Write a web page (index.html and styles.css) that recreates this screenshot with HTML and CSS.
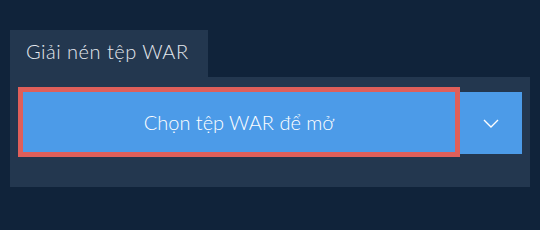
FILE: index.html
```html
<!DOCTYPE html>
<html lang="vi">
<head>
  <meta charset="UTF-8" />
  <title>Giải nén tệp WAR</title>
  <link rel="stylesheet" href="styles.css">
</head>
<body>
  <div class="tab">Giải nén tệp WAR</div>
  <div class="panel">
    <button class="open-btn">Chọn tệp WAR để mở</button>
    <button class="drop-btn" aria-label="Thêm">
      <svg width="16" height="9" viewBox="0 0 16 9">
        <path d="M1 1 L8 8 L15 1" fill="none" stroke="#fff" stroke-width="1.4"/>
      </svg>
    </button>
  </div>
</body>
</html>
```

FILE: styles.css
```css
body {
  margin: 0;
  background-color: #10233a;
  font-family: Lato, 'Noto Sans', sans-serif;
  width: 540px;
  height: 230px;
  overflow: hidden;
}

.tab {
  margin: 30px 0 0 10px;
  width: 198px;
  height: 47px;
  box-sizing: border-box;
  padding: 4px 0 0 16px;
  background-color: #23374f;
  color: #e4e8ee;
  font-size: 20px;
  font-weight: 300;
  letter-spacing: 0.5px;
  line-height: 34px;
}

.panel {
  margin: 0 10px;
  height: 110px;
  box-sizing: border-box;
  padding: 10px 8px;
  background-color: #23374f;
  display: flex;
  align-items: flex-start;
}

.open-btn {
  width: 442px;
  height: 70px;
  border: 5px solid #df5f5a;
  background-color: #4c9be8;
  color: #ffffff;
  font-family: Lato, 'Noto Sans', sans-serif;
  font-size: 20px;
  font-weight: 300;
  padding: 0;
  cursor: pointer;
}

.drop-btn {
  width: 62px;
  height: 62px;
  margin-top: 5px;
  border: none;
  padding: 0;
  background-color: #4c9be8;
  display: flex;
  align-items: center;
  justify-content: center;
  cursor: pointer;
}
```
